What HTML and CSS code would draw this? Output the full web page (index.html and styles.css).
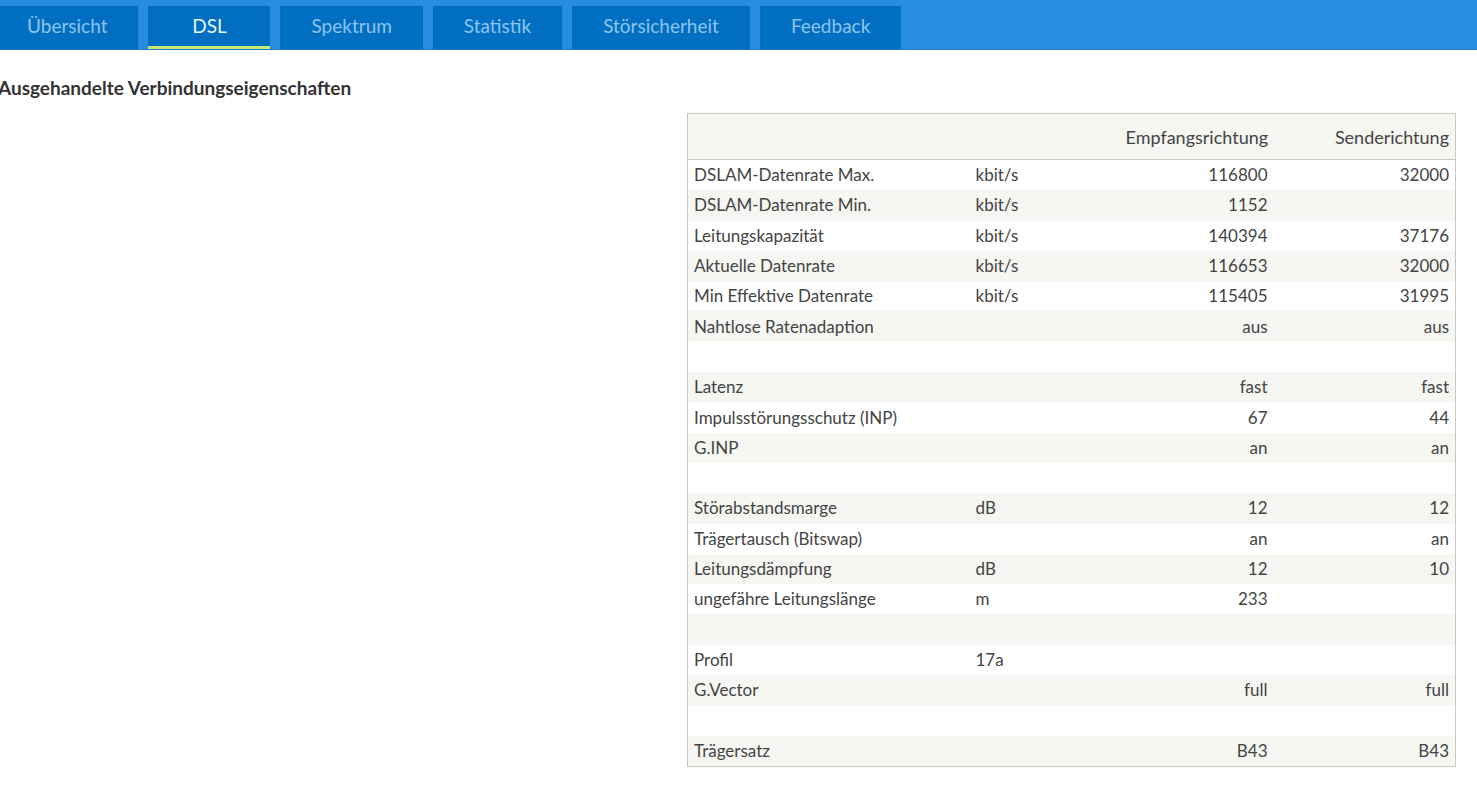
FILE: index.html
```html
<!DOCTYPE html>
<html lang="de">
<head>
<meta charset="utf-8">
<title>DSL</title>
<link rel="stylesheet" href="styles.css">
</head>
<body>
<nav class="tabbar">
  <a class="tab">Übersicht</a>
  <a class="tab active">DSL</a>
  <a class="tab">Spektrum</a>
  <a class="tab">Statistik</a>
  <a class="tab">Störsicherheit</a>
  <a class="tab">Feedback</a>
</nav>
<main class="content">
  <h2 class="title">Ausgehandelte Verbindungseigenschaften</h2>
  <div class="table-wrap">
    <table class="props">
      <colgroup>
        <col class="c-label"><col class="c-unit"><col class="c-rx"><col class="c-tx">
      </colgroup>
      <thead>
        <tr><th></th><th></th><th class="num">Empfangsrichtung</th><th class="num">Senderichtung</th></tr>
      </thead>
      <tbody>
        <tr><td>DSLAM-Datenrate Max.</td><td>kbit/s</td><td class="num">116800</td><td class="num">32000</td></tr>
        <tr><td>DSLAM-Datenrate Min.</td><td>kbit/s</td><td class="num">1152</td><td class="num"></td></tr>
        <tr><td>Leitungskapazität</td><td>kbit/s</td><td class="num">140394</td><td class="num">37176</td></tr>
        <tr><td>Aktuelle Datenrate</td><td>kbit/s</td><td class="num">116653</td><td class="num">32000</td></tr>
        <tr><td>Min Effektive Datenrate</td><td>kbit/s</td><td class="num">115405</td><td class="num">31995</td></tr>
        <tr><td>Nahtlose Ratenadaption</td><td></td><td class="num">aus</td><td class="num">aus</td></tr>
        <tr><td></td><td></td><td></td><td></td></tr>
        <tr><td>Latenz</td><td></td><td class="num">fast</td><td class="num">fast</td></tr>
        <tr><td>Impulsstörungsschutz (INP)</td><td></td><td class="num">67</td><td class="num">44</td></tr>
        <tr><td>G.INP</td><td></td><td class="num">an</td><td class="num">an</td></tr>
        <tr><td></td><td></td><td></td><td></td></tr>
        <tr><td>Störabstandsmarge</td><td>dB</td><td class="num">12</td><td class="num">12</td></tr>
        <tr><td>Trägertausch (Bitswap)</td><td></td><td class="num">an</td><td class="num">an</td></tr>
        <tr><td>Leitungsdämpfung</td><td>dB</td><td class="num">12</td><td class="num">10</td></tr>
        <tr><td>ungefähre Leitungslänge</td><td>m</td><td class="num">233</td><td class="num"></td></tr>
        <tr><td></td><td></td><td></td><td></td></tr>
        <tr><td>Profil</td><td>17a</td><td class="num"></td><td class="num"></td></tr>
        <tr><td>G.Vector</td><td></td><td class="num">full</td><td class="num">full</td></tr>
        <tr><td></td><td></td><td></td><td></td></tr>
        <tr><td>Trägersatz</td><td></td><td class="num">B43</td><td class="num">B43</td></tr>
      </tbody>
    </table>
  </div>
</main>
</body>
</html>
```
FILE: styles.css
```css
html, body {
  margin: 0;
  padding: 0;
  background: #ffffff;
}
body {
  font-family: "Lato", "Noto Sans", sans-serif;
  color: #444444;
  font-size: 17px;
}
.tabbar {
  display: flex;
  gap: 10px;
  height: 50px;
  box-sizing: border-box;
  padding-top: 6px;
  margin-left: -4px;
  background: #278ddf;
  border-bottom: 1px solid #1f7cc8;
}
.tab {
  display: flex;
  align-items: center;
  justify-content: center;
  min-width: 122px;
  box-sizing: border-box;
  padding: 0 31px 5px;
  background: #006fc1;
  color: #8ec4f0;
  font-size: 19px;
  cursor: pointer;
}
.tab.active {
  color: #e6f4fc;
  border-bottom: 3px solid #c6e872;
  padding-bottom: 2px;
}
.content {
  margin-left: -2px;
  padding-right: 21px;
}
.title {
  margin: 0;
  padding-top: 27px;
  font-size: 19px;
  font-weight: 700;
  color: #333333;
  line-height: 22px;
}
.table-wrap {
  display: flex;
  justify-content: flex-end;
  margin-top: 14px;
}
.props {
  width: 768px;
  table-layout: fixed;
  border-collapse: collapse;
  border: 1px solid #c8c8c8;
}
.c-label { width: 282px; }
.c-unit { width: 150px; }
.c-rx { width: 154px; }
.c-tx { width: 182px; }
.props th {
  height: 45px;
  font-weight: 400;
  font-size: 18px;
  background: #f6f6f3;
  border-bottom: 1px solid #c8c8c8;
  padding: 0 6px;
  text-align: left;
  color: #444;
  white-space: nowrap;
}
.props td {
  height: 30.3px;
  padding: 0 6px;
  line-height: 22px;
  white-space: nowrap;
}
.props tbody tr:nth-child(even) { background: #f6f6f3; }
.props .num { text-align: right; }
```
